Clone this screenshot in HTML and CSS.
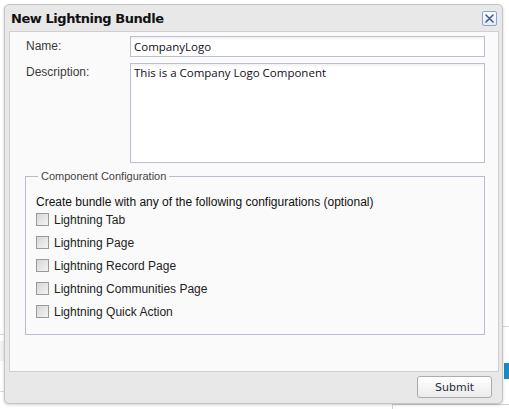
FILE: index.html
```html
<!DOCTYPE html>
<html>
<head>
<meta charset="utf-8">
<title>New Lightning Bundle</title>
<link rel="stylesheet" href="styles.css">
</head>
<body>
<div class="backdrop">
  <div class="bg-left"></div>
  <div class="bg-right"><span class="bg-blue"></span></div>
  <div class="bg-bottom"></div>
</div>
<div class="dialog">
  <div class="header">
    <span class="title">New Lightning Bundle</span>
    <span class="close" aria-label="Close">
      <svg width="9" height="9" viewBox="0 0 9 9"><path d="M1 1 L8 8 M8 1 L1 8" stroke="#3b5c9c" stroke-width="1.6" stroke-linecap="round"/></svg>
    </span>
  </div>
  <div class="panel">
    <div class="form">
      <label class="label">Name:</label>
      <div class="input">CompanyLogo</div>
      <label class="label label-top">Description:</label>
      <div class="textarea">This is a Company Logo Component</div>
    </div>
    <fieldset class="config">
      <legend class="legend">Component Configuration</legend>
      <div class="intro">Create bundle with any of the following configurations (optional)</div>
      <ul class="options">
        <li class="option"><span class="box"></span>Lightning Tab</li>
        <li class="option"><span class="box"></span>Lightning Page</li>
        <li class="option"><span class="box"></span>Lightning Record Page</li>
        <li class="option"><span class="box"></span>Lightning Communities Page</li>
        <li class="option"><span class="box"></span>Lightning Quick Action</li>
      </ul>
    </fieldset>
  </div>
  <div class="footer">
    <button class="submit">Submit</button>
  </div>
</div>
</body>
</html>
```
FILE: styles.css
```css
html, body {
  margin: 0;
  padding: 0;
  background: #ffffff;
  width: 509px;
  height: 409px;
  overflow: hidden;
  position: relative;
  font-family: "Liberation Sans", Arial, sans-serif;
}

.backdrop .bg-left {
  position: absolute;
  left: 0;
  top: 334px;
  width: 4px;
  height: 56px;
  border-top: 1px solid #d8d8d8;
  border-bottom: 1px solid #d8d8d8;
  background: linear-gradient(#f2f2f2, #f2f2f2) 0 6px / 4px 20px no-repeat;
}

.backdrop .bg-right {
  position: absolute;
  left: 503px;
  top: 326px;
  width: 6px;
  height: 70px;
  border-top: 1px solid #d4d4d4;
}

.backdrop .bg-blue {
  position: absolute;
  left: 1px;
  top: 36px;
  width: 5px;
  height: 16px;
  background: #1a8cc2;
}

.backdrop .bg-bottom {
  position: absolute;
  left: 392px;
  top: 404px;
  width: 117px;
  height: 5px;
  border-left: 1px solid #d0d0d0;
  border-top: 1px solid #d0d0d0;
}

.dialog {
  position: absolute;
  left: 4px;
  top: 4px;
  width: 499px;
  height: 400px;
  box-sizing: border-box;
  border: 1px solid #c4c4c4;
  border-radius: 5px;
  background: #e8e8e8;
  box-shadow: 0 1px 3px rgba(0, 0, 0, 0.18);
  display: flex;
  flex-direction: column;
}

.header {
  height: 26px;
  display: flex;
  align-items: center;
  justify-content: space-between;
  padding: 0 5px 0 6px;
}

.title {
  font-family: "DejaVu Sans", Verdana, sans-serif;
  font-weight: bold;
  font-size: 13px;
  color: #111;
  letter-spacing: -0.45px;
  margin-top: 1px;
}

.close {
  width: 13px;
  height: 13px;
  border: 1px solid #8aa3cf;
  border-radius: 2px;
  background: linear-gradient(#ffffff, #e4ebf6);
  display: flex;
  align-items: center;
  justify-content: center;
  margin-top: 1px;
}

.panel {
  margin: 0 3px 0 4px;
  height: 341px;
  box-sizing: border-box;
  border: 1px solid #d5cdcd;
  background: #fafafa;
  padding: 4px 13px 0 16px;
}

.form {
  display: grid;
  grid-template-columns: 104px 355px;
  row-gap: 6px;
}

.label {
  font-size: 12px;
  color: #3a3a3a;
  line-height: 21px;
}

.label-top {
  line-height: 16px;
  padding-top: 1px;
}

.input, .textarea {
  box-sizing: border-box;
  border: 1px solid #bcbfd0;
  background: #ffffff;
  box-shadow: inset 0 2px 2px rgba(0, 0, 0, 0.05);
  font-family: "Open Sans", "Noto Sans", sans-serif;
  font-size: 11.5px;
  color: #101020;
  padding: 0 3px;
}

.input {
  height: 21px;
  line-height: 19px;
}

.textarea {
  height: 100px;
  line-height: 16px;
  padding-top: 1px;
}

.config {
  margin: 7px 0 0 -1px;
  width: 460px;
  box-sizing: border-box;
  border: 1px solid #babdcf;
  padding: 12px 10px 10px 10px;
  height: 165px;
}

.legend {
  font-size: 11px;
  color: #444;
  padding: 0 3px;
  margin-left: 2px;
  line-height: 13px;
}

.intro {
  font-size: 12px;
  color: #111;
  line-height: 14px;
}

.options {
  list-style: none;
  margin: -1px 0 0 0;
  padding: 0;
}

.option {
  height: 23px;
  display: flex;
  align-items: center;
  font-size: 12px;
  color: #222;
}

.box {
  width: 11px;
  height: 11px;
  border: 1px solid #9a9a9a;
  background: linear-gradient(135deg, #d6d6d6, #f4f4f4);
  margin-right: 5px;
  flex: none;
}

.footer {
  flex: 1;
  display: flex;
  justify-content: flex-end;
  align-items: flex-start;
  padding: 4px 10px 0 0;
}

.submit {
  width: 75px;
  height: 22px;
  border: 1px solid #ababab;
  border-radius: 3px;
  background: linear-gradient(#ffffff, #ebebeb);
  font-family: "DejaVu Sans", Tahoma, sans-serif;
  font-size: 11px;
  color: #2a2a3a;
  padding: 0;
}
```
